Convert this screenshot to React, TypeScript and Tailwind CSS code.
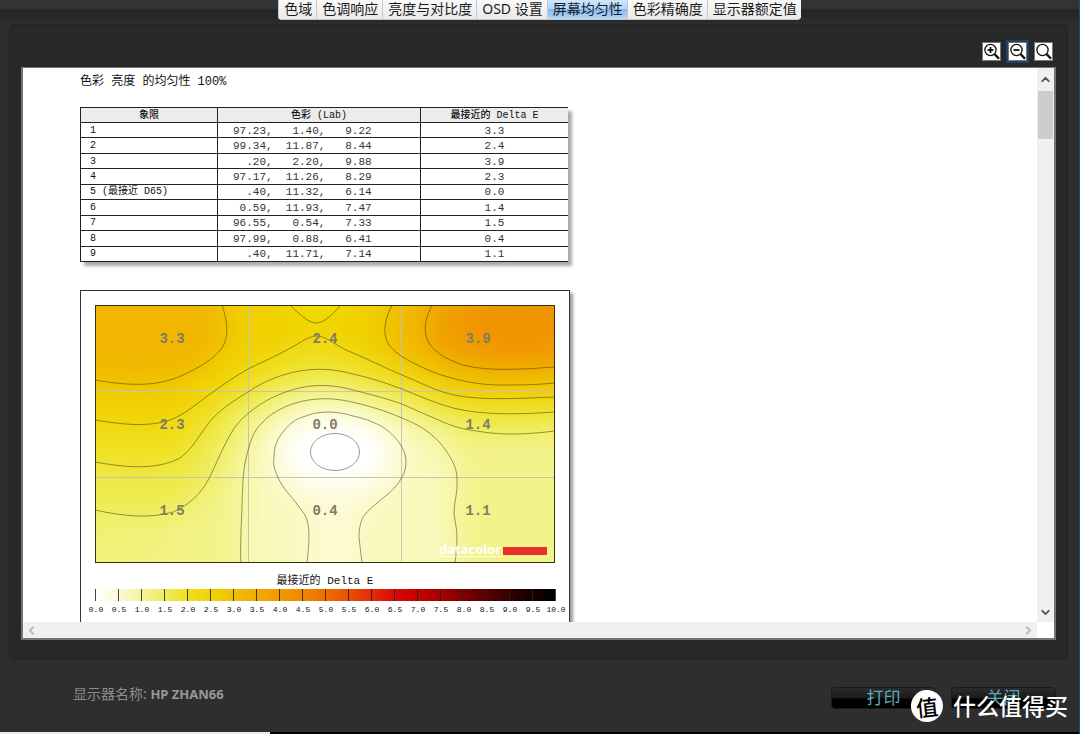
import { useState } from "react";
import { ChevronDown, ChevronLeft, ChevronRight, ChevronUp } from "lucide-react";

const TABS = [
  "色域",
  "色调响应",
  "亮度与对比度",
  "OSD 设置",
  "屏幕均匀性",
  "色彩精确度",
  "显示器额定值",
];

interface QuadrantRow {
  name: string;
  lab: string;
  deltaE: string;
}

const ROWS: QuadrantRow[] = [
  { name: "1", lab: "97.23,   1.40,   9.22", deltaE: "3.3" },
  { name: "2", lab: "99.34,  11.87,   8.44", deltaE: "2.4" },
  { name: "3", lab: "  .20,   2.20,   9.88", deltaE: "3.9" },
  { name: "4", lab: "97.17,  11.26,   8.29", deltaE: "2.3" },
  { name: "5 (最接近 D65)", lab: "  .40,  11.32,   6.14", deltaE: "0.0" },
  { name: "6", lab: " 0.59,  11.93,   7.47", deltaE: "1.4" },
  { name: "7", lab: "96.55,   0.54,   7.33", deltaE: "1.5" },
  { name: "8", lab: "97.99,   0.88,   6.41", deltaE: "0.4" },
  { name: "9", lab: "  .40,  11.71,   7.14", deltaE: "1.1" },
];

const MONO = "font-['Liberation_Mono','Noto_Sans_CJK_SC',monospace]";

// Contour lines, in the map's own 460 x 258 space
const TOP_LEFT = "M0 75 C35 81 62 82 88 70 C103 63 119 54 127 43 C134 32 133 18 127 0";
const TOP_NOTCH = "M195 0 C205 10 214 18 221 18 C229 18 237 10 246 0";
const TOP_RIGHT_OUTER =
  "M297 0 C291 12 288 24 291 33 C294 46 312 56 338 67 C362 76 385 80 405 80 C425 80 440 80 460 78";
const TOP_RIGHT_INNER =
  "M337 0 C331 12 328 24 332 34 C337 46 350 54 368 60 C394 67 430 64 460 62";
const LEVEL_25 =
  "M0 115 C25 119 58 124 82 112 C96 105 107 94 118 87 C130 78 141 71 153 64 C165 58 177 53 188 47 C202 40 213 31 222 31 C232 31 240 41 258 48 C275 55 290 63 307 70 C322 76 335 83 348 87 C378 97 425 93 460 92";
const LEVEL_20 =
  "M0 157 C28 162 60 166 85 153 C99 143 106 126 118 113 C130 101 140 95 153 87 C163 80 175 74 188 70 C214 62 236 63 258 69 C276 73 291 78 307 84 C324 91 340 98 358 103 C390 111 430 109 460 107";
const LEVEL_15 =
  "M0 205 C27 211 54 214 78 207 C102 196 111 181 118 165 C125 150 130 138 138 125 C144 116 150 111 155 107 C166 98 177 92 188 88 C214 78 236 79 258 85 C274 89 290 93 307 99 C321 105 334 111 348 117 C360 122 371 125 382 126 C408 131 435 129 460 126";
const LEVEL_10 =
  "M146 258 C145 247 146 236 146 225 C147 207 147 192 148 175 C149 162 151 152 154 142 C157 131 161 123 168 117 C174 110 183 105 192 101 C212 93 233 92 252 96 C272 100 291 106 307 113 C319 118 329 123 338 131 C346 138 351 145 355 152 C360 160 362 167 362 175 C363 187 359 197 359 208 C360 217 362 224 362 232 C362 242 361 250 360 258";
const LEVEL_05 =
  "M212 258 C213 248 214 240 214 232 C214 223 213 216 210 210 C205 203 199 195 193 188 C188 182 184 176 182 170 C179 164 178 158 179 152 C179 142 182 134 188 127 C195 118 201 114 208 112 C224 105 242 106 258 111 C272 114 284 119 292 125 C303 134 310 144 311 155 C311 162 310 167 307 172 C303 180 296 187 288 193 C281 199 273 205 268 212 C265 218 264 225 264 232 C265 241 266 250 267 258";

const LINES = [
  TOP_LEFT,
  TOP_NOTCH,
  TOP_RIGHT_OUTER,
  TOP_RIGHT_INNER,
  LEVEL_25,
  LEVEL_20,
  LEVEL_15,
  LEVEL_10,
  LEVEL_05,
];

// Closing segments run past the map's edges so that the blur stays outside
const BANDS = [
  { d: LEVEL_15 + " H520 V-60 H-60 V205 Z", fill: "#eeea4c" },
  { d: LEVEL_20 + " H520 V-60 H-60 V157 Z", fill: "#efdf1c" },
  { d: LEVEL_25 + " H520 V-60 H-60 V115 Z", fill: "#f0d000" },
  { d: TOP_RIGHT_OUTER + " H520 V-60 H297 Z", fill: "#f0b900" },
  { d: TOP_RIGHT_INNER + " H520 V-60 H337 Z", fill: "#f0a000" },
  { d: TOP_LEFT + " V-60 H-60 V75 Z", fill: "#f0b600" },
  { d: TOP_NOTCH + " V-60 H195 Z", fill: "#f0de00" },
  { d: LEVEL_10 + " V320 H146 Z", fill: "#f9f9bc" },
  { d: LEVEL_05 + " V320 H212 Z", fill: "#fcfad2" },
];

const MAP_LABELS = [
  ["3.3", "2.4", "3.9"],
  ["2.3", "0.0", "1.4"],
  ["1.5", "0.4", "1.1"],
];

const SCALE_STOPS = [
  [0, "#ffffff"],
  [5, "#fafad8"],
  [10, "#f4f49c"],
  [15, "#eeec5c"],
  [20, "#efe020"],
  [27, "#f0cc00"],
  [35, "#f0ac00"],
  [45, "#f08800"],
  [52, "#ee6400"],
  [60, "#e62c08"],
  [66, "#d80404"],
  [75, "#a80000"],
  [84, "#600000"],
  [93, "#200000"],
  [100, "#000000"],
] as const;

export default function App() {
  const [activeTab, setActiveTab] = useState("屏幕均匀性");

  return (
    <div className="relative flex h-screen flex-col overflow-hidden border-r border-[#1d4a70] bg-[#2e2e2e] font-['Noto_Sans','Noto_Sans_CJK_SC',sans-serif]">
      <header className="flex h-6 shrink-0 justify-center bg-[linear-gradient(#333_0,#333_9px,#242424_10px,#2d2d2d_24px)]">
        <nav className="flex h-5 overflow-hidden rounded-b border-b border-[#c8c8c8] bg-[#f1f1f1]">
          {TABS.map((tab) => (
            <button
              key={tab}
              onClick={() => setActiveTab(tab)}
              className={`border-l border-[#c5c9cf] pr-1 pb-0.5 pl-[5px] text-sm leading-4 whitespace-nowrap text-[#1c1c1c] ${
                tab === activeTab
                  ? "bg-[linear-gradient(#cfe6fb,#b3d6f8_45%,#7fbaf2_50%,#b5d9fa)]"
                  : "bg-[linear-gradient(#fafafa,#e9e9e9)]"
              }`}
            >
              {tab}
            </button>
          ))}
        </nav>
      </header>

      <main className="mr-[11px] ml-[9px] flex min-h-0 flex-1 flex-col rounded-md border border-[#222] bg-[#282828] px-[11px] pb-[19px]">
        <div className="flex justify-end gap-[7px] pt-[17px] pr-[3px] pb-1.5">
          <ZoomButton label="放大" kind="in" />
          <ZoomButton label="缩小" kind="out" />
          <ZoomButton label="重置" kind="reset" />
        </div>
        <ReportView />
      </main>

      <footer className="flex h-[72px] shrink-0 items-center justify-between pr-[23px] pb-1 pl-[73px]">
        <p className="text-sm text-[#8c8c8c]">
          显示器名称: <span className="text-[13px] font-bold text-[#989898]">HP ZHAN66</span>
        </p>
        <div className="flex gap-[15px] pt-2">
          <FooterButton label="打印" />
          <FooterButton label="关闭" />
        </div>
      </footer>
      <div className="flex h-0.5 shrink-0 bg-black">
        <div className="w-1/4 bg-[#f0eaea]" />
      </div>

      <Watermark />
    </div>
  );
}

function ZoomButton({ label, kind }: { label: string; kind: "in" | "out" | "reset" }) {
  return (
    <button
      aria-label={label}
      className={`h-[19px] w-[19px] border border-[#777] bg-white ${
        kind === "out" ? "ring-2 ring-[#1d4468]" : ""
      }`}
    >
      <svg viewBox="0 0 17 17" className="h-[17px] w-[17px]" fill="none" stroke="#111">
        <circle cx="7.5" cy="7" r="5.6" strokeWidth="1.3" />
        <path d="M11.5 11 L16 15.8" strokeWidth="2.4" />
        {kind !== "reset" && <path d="M4.5 7 H10.5" strokeWidth="1.8" />}
        {kind === "in" && <path d="M7.5 4 V10" strokeWidth="1.8" />}
      </svg>
    </button>
  );
}

function FooterButton({ label }: { label: string }) {
  return (
    <button className="h-[22px] w-[105px] rounded-sm border border-[#1a1a1a] bg-[linear-gradient(#2b2b2b,#1c1c1c_48%,#000_55%,#000)] text-[17px] leading-4 text-[#5fa9bb]">
      {label}
    </button>
  );
}

function ReportView() {
  return (
    <section className="flex min-h-0 flex-1 flex-col border-2 border-t border-[#747474] bg-white">
      <div className="flex min-h-0 flex-1">
        <div className={`min-w-0 flex-1 overflow-hidden pt-1.5 pl-[57px] text-[#111] ${MONO}`}>
          <h1 className="text-xs leading-4">色彩 亮度 的均匀性 100%</h1>
          <UniformityTable />
          <UniformityChart />
        </div>
        <div className="flex w-[17px] flex-col items-center bg-[#f0f0f0] text-[#555]">
          <button aria-label="向上滚动" className="flex h-[23px] items-center">
            <ChevronUp size={13} strokeWidth={3.5} />
          </button>
          <div className="h-12 w-[15px] bg-[#cdcdcd]" />
          <button aria-label="向下滚动" className="mt-auto flex h-[19px] items-center">
            <ChevronDown size={13} strokeWidth={3.5} />
          </button>
        </div>
      </div>
      <div className="flex h-4 shrink-0">
        <div className="flex flex-1 items-center justify-between bg-[#f0f0f0] px-0.5 text-[#bdbdbd]">
          <button aria-label="向左滚动">
            <ChevronLeft size={13} strokeWidth={3.5} />
          </button>
          <button aria-label="向右滚动">
            <ChevronRight size={13} strokeWidth={3.5} />
          </button>
        </div>
        <div className="w-[17px] bg-white" />
      </div>
    </section>
  );
}

function UniformityTable() {
  return (
    <table className="mt-[17px] h-[155px] w-[488px] table-fixed border-collapse border-y border-l border-[#222] text-[10px] leading-3 shadow-[4px_4px_3px_#aaa]">
      <thead>
        <tr className="h-[15px] bg-[#ececec]">
          <th className="w-[137px] border border-[#222] p-0 pt-px font-medium">象限</th>
          <th className="w-[203px] border border-[#222] p-0 pt-px font-medium">色彩 (Lab)</th>
          <th className="border-y border-[#222] p-0 pt-px font-medium">最接近的 Delta E</th>
        </tr>
      </thead>
      <tbody>
        {ROWS.map((row) => (
          <tr key={row.name} className="bg-white">
            <td className="border border-[#222] p-0 pt-px pl-[9px]">{row.name}</td>
            <td className="border border-[#222] p-0 pt-px pl-[15px] text-[11px] whitespace-pre text-[#3a3038]">
              {row.lab}
            </td>
            <td className="border-y border-[#222] p-0 pt-px text-center text-[11px] text-[#3a3038]">
              {row.deltaE}
            </td>
          </tr>
        ))}
      </tbody>
    </table>
  );
}

function UniformityChart() {
  return (
    <figure className="mt-7 w-[490px] border border-[#333] bg-white px-3.5 pt-3.5 pb-5 shadow-[3px_3px_3px_#999]">
      <HeatMap />
      <figcaption className="mt-2.5 text-center text-[11px] leading-4">
        最接近的 Delta E
      </figcaption>
      <ColorScale />
    </figure>
  );
}

function HeatMap() {
  return (
    <svg viewBox="0 0 460 258" className="block h-[258px] w-[460px]">
      <defs>
        <filter
          id="soft"
          x="-80"
          y="-80"
          width="620"
          height="420"
          filterUnits="userSpaceOnUse"
          colorInterpolationFilters="sRGB"
        >
          <feGaussianBlur stdDeviation="14" />
        </filter>
        <linearGradient id="base">
          <stop offset="0" stopColor="#eff068" />
          <stop offset="0.3" stopColor="#f2f386" />
          <stop offset="1" stopColor="#f3f38e" />
        </linearGradient>
      </defs>
      <g filter="url(#soft)">
        <rect x="-80" y="-80" width="620" height="420" fill="url(#base)" />
        {BANDS.map((band) => (
          <path key={band.d} d={band.d} fill={band.fill} />
        ))}
        <ellipse cx="425" cy="20" rx="65" ry="30" fill="#f09400" />
        <ellipse cx="240" cy="147" rx="58" ry="39" fill="#ffffff" />
      </g>
      <path d="M153.5 0 V258 M306.5 0 V258 M0 86.5 H460 M0 172.5 H460" stroke="#c9c4b2" />
      <g fill="none" stroke="#3c3400" strokeOpacity="0.5">
        {LINES.map((d) => (
          <path key={d} d={d} />
        ))}
      </g>
      <ellipse cx="240" cy="147" rx="24.5" ry="18.5" fill="#fff" stroke="#999" />
      <g
        className="text-sm"
        fontFamily="'Liberation Mono', monospace"
        fontWeight="bold"
        fill="#817b68"
        textAnchor="middle"
      >
        {MAP_LABELS.map((row, r) =>
          row.map((label, c) => (
            <text key={label} x={77 + c * 153} y={38 + r * 86}>
              {label}
            </text>
          )),
        )}
      </g>
      <text
        x="344"
        y="249"
        fontSize="13"
        fontWeight="bold"
        fontFamily="'Open Sans', sans-serif"
        fill="#fff"
      >
        datacolor
      </text>
      <path d="M344 251.5 H408" stroke="#fff" strokeOpacity="0.7" />
      <rect x="408" y="242" width="44" height="8" fill="#ea2f2f" />
      <rect x="0.5" y="0.5" width="459" height="257" fill="none" stroke="#33300a" />
    </svg>
  );
}

function ColorScale() {
  const ticks = Array.from({ length: 21 }, (_, i) => i);

  return (
    <svg viewBox="0 0 460 26" className="block h-[26px] w-[460px] overflow-visible">
      <defs>
        <linearGradient id="scale">
          {SCALE_STOPS.map(([offset, color]) => (
            <stop key={offset} offset={`${offset}%`} stopColor={color} />
          ))}
        </linearGradient>
      </defs>
      <rect width="460" height="12" fill="url(#scale)" />
      {ticks.map((i) => (
        <g key={i}>
          <path d={`M${i * 23 + 0.5} 0 V12`} stroke="#222" strokeOpacity="0.85" />
          <text
            x={i * 23 + 1}
            y="23"
            fontSize="8"
            fontFamily="'Liberation Mono', monospace"
            fill="#111"
            textAnchor="middle"
          >
            {(i / 2).toFixed(1)}
          </text>
        </g>
      ))}
    </svg>
  );
}

function Watermark() {
  return (
    <div className="pointer-events-none absolute right-[11px] bottom-3 flex items-center gap-2.5 text-white">
      <span className="flex h-8 w-8 -rotate-6 items-center justify-center rounded-full bg-white font-['Noto_Sans_CJK_SC',sans-serif] text-[22px] leading-8 font-medium text-black">
        值
      </span>
      <span className="text-[23px] leading-8 font-medium">什么值得买</span>
    </div>
  );
}
